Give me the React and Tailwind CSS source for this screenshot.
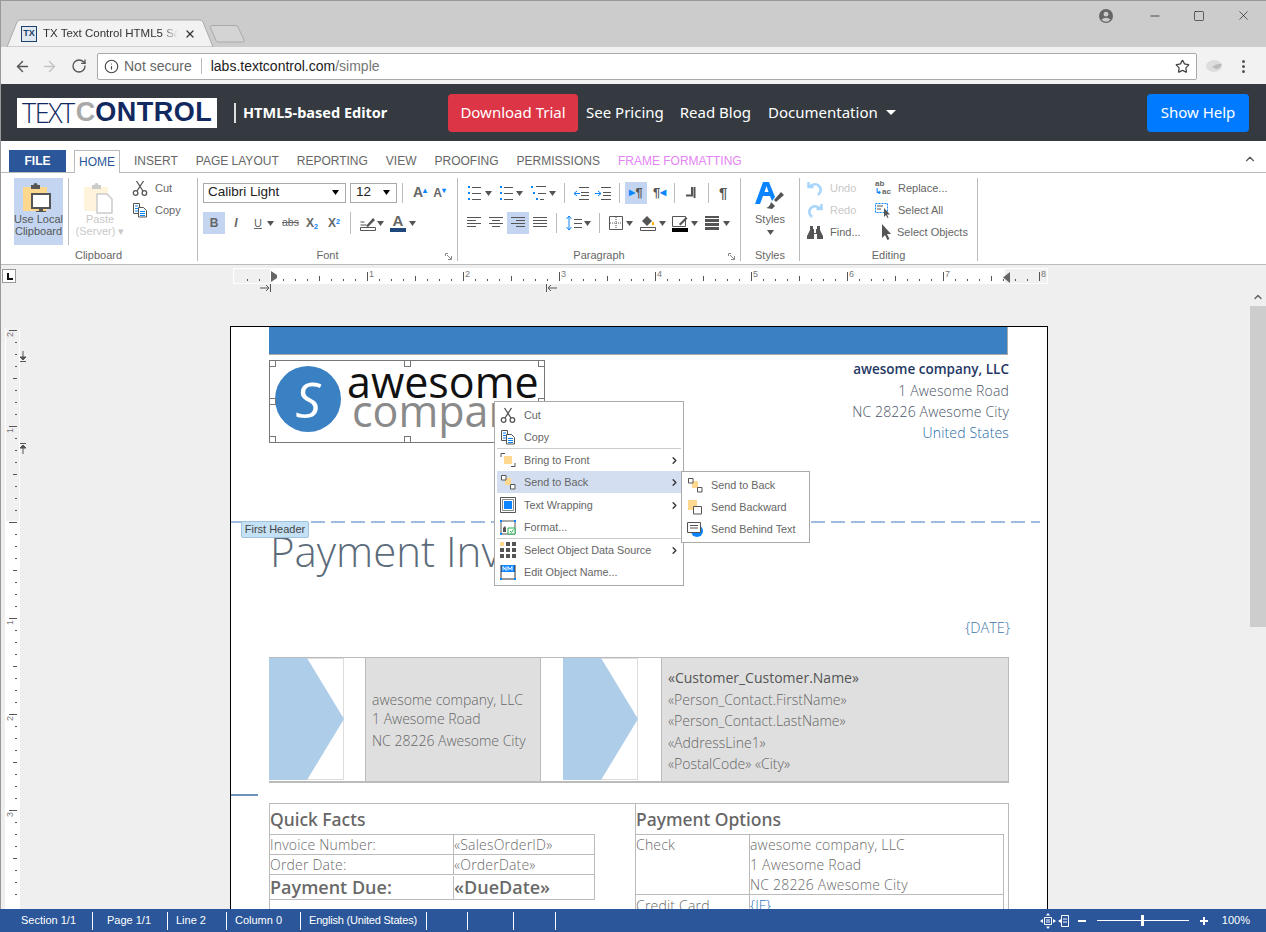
import React from 'react';
import clsx from 'clsx';
import { ArrowLeft, ArrowRight, RotateCw, Info, Star, X, Minus, Square, ChevronRight, ChevronUp } from 'lucide-react';

const Caret = ({ className }) => (
    <svg width="7" height="5" viewBox="0 0 7 5" className={clsx('shrink-0', className)}><path d="M0 0h7L3.500 5z" fill="#555" /></svg>
);

const Sep = ({ className }) => <div className={clsx('w-px bg-[#bbb] shrink-0', className)} />;

const Scissors = () => (
    <svg width="16" height="16" viewBox="0 0 16 16" fill="none" stroke="#555" strokeWidth="1.300">
        <circle cx="3.600" cy="13" r="2.300" /><circle cx="12.400" cy="13" r="2.300" />
        <path d="M5 11 11.500 1M11 11 4.500 1" />
    </svg>
);

const CopyIcon = () => (
    <svg width="16" height="16" viewBox="0 0 16 16" fill="none" strokeWidth="1">
        <path d="M1.500 1.500h6v10h-6z" stroke="#555" fill="#fff" />
        <path d="M6.500 5.500h5l3 3v6.500h-8z" stroke="#555" fill="#fff" />
        <path d="M3 4h3M3 6.500h3M3 9h3" stroke="#0a84ff" />
        <path d="M8 9.500h5M8 11.500h5M8 13.500h5" stroke="#0a84ff" />
    </svg>
);

const Clipboard = ({ faded, children }) => (
    <svg width="34" height="36" viewBox="0 0 34 36" className={faded ? 'opacity-30' : ''}>
        <path d="M1 6h24v24H1z" fill="#ffd88f" />
        <path d="M9 4h2.500a2 2 0 0 1 4 0H18v4H9z" fill="#555" />
        {children}
    </svg>
);

const Arrange = ({ variant }) => (
    <svg width="16" height="16" viewBox="0 0 16 16" fill="none" stroke="#555">
        {variant === 'front' && <><path d="M1 5V1.500h4M15 11v3.500h-4" /><path d="M4 4h8v8H4z" fill="#ffd88f" stroke="none" /></>}
        {variant === 'back' && <><path d="M5 4h6v7H5z" fill="#ffd88f" stroke="none" /><path d="M1.500 1.500h4.500v4.500H1.500zM10.500 10.500H15V15h-4.500z" fill="#fff" /></>}
        {variant === 'backward' && <><path d="M1 1h9v10H1z" fill="#ffd88f" stroke="none" /><path d="M6.500 7.500h8v7.500h-8z" fill="#fff" /></>}
    </svg>
);

const MenuItem = ({ icon, label, arrow, hover }) => (
    <div className={clsx('h-[22px] flex items-center pl-[2px] pr-[1px]', hover && 'bg-[#d3dff0]')}>
        <div className="w-[18px] flex justify-center">{icon}</div>
        <span className="ml-[7px] flex-1 text-[#666] whitespace-nowrap">{label}</span>
        {arrow && <ChevronRight size={11} strokeWidth={3} color="#333" />}
    </div>
);

const Menus = () => (
    <>
        <div className="absolute left-[494px] top-[401px] w-[190px] h-[185px] bg-white border border-[#aaa] pt-[2px] px-[2px] text-[10.800px] font-['Liberation_Sans',sans-serif] z-10">
            <MenuItem icon={<Scissors />} label="Cut" />
            <MenuItem icon={<CopyIcon />} label="Copy" />
            <div className="h-px bg-[#ccc]" />
            <MenuItem icon={<Arrange variant="front" />} label="Bring to Front" arrow />
            <MenuItem icon={<Arrange variant="back" />} label="Send to Back" arrow hover />
            <div className="h-px" />
            <MenuItem
                icon={<svg width="16" height="16" viewBox="0 0 16 16"><path d="M.5.500h15v15H.5z" fill="#fff" stroke="#555" /><path d="M2.500 2.500h11v11h-11z" fill="none" stroke="#888" /><path d="M4 4h8v8H4z" fill="#0a84ff" /></svg>}
                label="Text Wrapping"
                arrow
            />
            <MenuItem
                icon={<svg width="16" height="16" viewBox="0 0 16 16"><path d="M1 2h14v13H1z" fill="#fff" stroke="#555" /><path d="M3 13V9l2-2 1 2v4z" fill="#555" /><path d="M8 9h7v6H8z" fill="#fff" stroke="#22b14c" /><path d="m10 12 1.500 1.500 2-3" fill="none" stroke="#22b14c" /><path d="M0 1h2v2H0zM14 1h2v2h-2zM0 14h2v2H0z" fill="#0a84ff" /></svg>}
                label="Format..."
            />
            <div className="h-px bg-[#ccc]" />
            <MenuItem
                icon={<svg width="16" height="16" viewBox="0 0 16 16" fill="#555"><path d="M0 0h4v4H0z" fill="#ffd88f" /><path d="M6 0h4v4H6zM12 0h4v4h-4zM0 6h4v4H0zM6 6h4v4H6zM12 6h4v4h-4zM0 12h4v4H0zM6 12h4v4H6zM12 12h4v4h-4z" /></svg>}
                label="Select Object Data Source"
                arrow
            />
            <MenuItem
                icon={<svg width="16" height="16" viewBox="0 0 16 16"><path d="M1 1h14v7H1z" fill="#0a84ff" /><path d="M3 6.500V2.500l3 4v-4M8 6.500v-4l2 3 2-3v4" fill="none" stroke="#fff" /><path d="M1 1v14h14V1" fill="none" stroke="#333" /><path d="M0 14h2v2H0zM14 14h2v2h-2z" fill="#0a84ff" /></svg>}
                label="Edit Object Name..."
            />
        </div>
        <div className="absolute left-[681px] top-[471px] w-[129px] h-[72px] bg-white border border-[#aaa] pt-[2px] pl-[2px] text-[10.800px] font-['Liberation_Sans',sans-serif] z-20">
            <MenuItem icon={<Arrange variant="back" />} label="Send to Back" />
            <MenuItem icon={<Arrange variant="backward" />} label="Send Backward" />
            <MenuItem
                icon={<svg width="16" height="16" viewBox="0 0 16 16"><circle cx="10" cy="10" r="6" fill="#0a84ff" /><path d="M.5 1.500h13v10H.5z" fill="#fff" stroke="#555" /><path d="M3 4.500h8M3 7h8" stroke="#555" /></svg>}
                label="Send Behind Text"
            />
        </div>
    </>
);

const BrowserChrome = () => (
    <>
        <div className="h-[47px] bg-[#cccccc] flex items-end relative shrink-0">
            <svg width="240" height="28" viewBox="0 0 240 28" className="absolute left-[5px] top-[19px]">
                <path d="M2 28 12 3q1-2 3-2h180q2 0 3 2l10 25z" fill="#f2f2f2" stroke="#aaa" />
                <path d="M205 8q.5-1.500 2-1.500h24q1.500 0 2 1.500l6 13q.5 2-1.500 2H213q-1.500 0-2-1.500z" fill="#d4d4d4" stroke="#aaa" />
            </svg>
            <div className="relative flex items-center h-[27px] pl-[21px] w-[205px]">
                <div className="w-[16px] h-[16px] border border-[#1d3f6b] bg-[#dfe7ef] flex items-center justify-center text-[9px] font-bold text-[#1d3f6b] font-['Liberation_Sans',sans-serif]">TX</div>
                <span className="ml-[6px] w-[135px] overflow-hidden whitespace-nowrap text-[11.500px] text-[#333] font-['Liberation_Sans',sans-serif] [mask-image:linear-gradient(to_right,black_88%,transparent)]">TX Text Control HTML5 Sa</span>
                <X size={12} strokeWidth={2.500} color="#333" className="ml-[6px]" />
            </div>
            <div className="flex-1" />
            <div className="self-start flex items-center h-[31px] mr-[15px] text-[#333]">
                <svg width="14" height="14" viewBox="0 0 14 14" className="mr-[35px]"><circle cx="7" cy="7" r="7" fill="#666" /><circle cx="7" cy="5.200" r="2.400" fill="#ccc" /><path d="M2.500 10.500q4.500-3.500 9 0-2 2.200-4.500 2.200t-4.500-2.200" fill="#ccc" /></svg>
                <Minus size={14} strokeWidth={1.200} color="#111" className="mr-[31px]" />
                <Square size={12} strokeWidth={1.200} color="#111" className="mr-[31px]" />
                <X size={15} strokeWidth={1} color="#111" />
            </div>
        </div>
        <div className="h-[37px] bg-[#f2f2f2] flex items-center pl-[14px] pt-[1px] shrink-0">
            <ArrowLeft size={17} strokeWidth={2} color="#555" />
            <ArrowRight size={17} strokeWidth={2} color="#c4c4c4" className="ml-[10px]" />
            <RotateCw size={16} strokeWidth={2} color="#555" className="ml-[13px]" />
            <div className="ml-[10px] w-[1100px] h-[27px] bg-white border border-[#a9a9a9] rounded-[2px] flex items-center pl-[6px] pr-[6px] text-[14px] font-['Liberation_Sans',sans-serif]">
                <Info size={15} color="#444" strokeWidth={1.800} />
                <span className="ml-[5px] text-[#666]">Not secure</span>
                <div className="w-px h-[16px] bg-[#bbb] mx-[9px]" />
                <span className="text-[#222]">labs.textcontrol.com</span>
                <span className="text-[#777]">/simple</span>
                <div className="flex-1" />
                <Star size={15} strokeWidth={2} color="#444" />
            </div>
            <svg width="18" height="14" viewBox="0 0 18 14" className="ml-[8px]"><ellipse cx="9" cy="7" rx="8" ry="6" fill="#ddd" /><path d="M7 8q5-4 10-3-2 5-6 5z" fill="#bbb" /></svg>
            <div className="ml-[19px] flex flex-col gap-[2px]">
                <div className="w-[3px] h-[3px] rounded-full bg-[#555]" />
                <div className="w-[3px] h-[3px] rounded-full bg-[#555]" />
                <div className="w-[3px] h-[3px] rounded-full bg-[#555]" />
            </div>
        </div>
    </>
);

const Navbar = () => (
    <div className="h-[57px] bg-[#343a40] flex items-center pl-[17px] text-white font-['Noto_Sans',sans-serif] shrink-0">
        <div className="w-[200px] h-[30px] bg-white flex items-center pl-[5px] font-['Liberation_Sans',sans-serif] text-[#12295f] text-[27px] leading-none whitespace-nowrap overflow-hidden">
            <span className="tracking-[-1.500px] font-['Open_Sans',sans-serif] font-light">TEXT</span>
            <span className="font-bold text-[#a9a9a9] ml-[2px]">C</span>
            <span className="font-bold tracking-[0.500px]">ONTROL</span>
        </div>
        <div className="w-[2px] h-[20px] bg-[#ddd] ml-[17px]" />
        <span className="ml-[7px] text-[14.500px] font-bold w-[205px] whitespace-nowrap">HTML5-based Editor</span>
        <div className="w-[130px] h-[38px] bg-[#dc3545] rounded-[4px] flex items-center justify-center text-[15px]">Download Trial</div>
        <span className="ml-[8px] text-[15px]">See Pricing</span>
        <span className="ml-[16px] text-[15px]">Read Blog</span>
        <span className="ml-[17px] text-[15px]">Documentation</span>
        <svg width="10" height="5" viewBox="0 0 10 5" className="ml-[8px]"><path d="M0 0h10L5 5z" fill="#fff" /></svg>
        <div className="flex-1" />
        <div className="w-[102px] h-[38px] bg-[#007bff] rounded-[4px] flex items-center justify-center text-[15px] mr-[17px]">Show Help</div>
    </div>
);

const RibbonTabs = () => (
    <div className="h-[32px] bg-white border-b border-[#bbb] flex items-end pl-[9px] text-[12px] text-[#666] font-['Liberation_Sans',sans-serif] shrink-0">
        <div className="w-[57px] h-[22px] bg-[#2b579a] text-white font-bold flex items-center justify-center">FILE</div>
        <div className="ml-[8px] w-[46px] h-[23px] bg-white border border-b-0 border-[#bbb] text-[#2b579a] flex items-center justify-center -mb-px">HOME</div>
        <div className="flex gap-[18px] ml-[14px] h-[22px] items-center">
            <span>INSERT</span>
            <span>PAGE LAYOUT</span>
            <span>REPORTING</span>
            <span>VIEW</span>
            <span>PROOFING</span>
            <span>PERMISSIONS</span>
            <span className="text-[#e584f5]">FRAME FORMATTING</span>
        </div>
        <div className="flex-1" />
        <ChevronUp size={14} strokeWidth={2} color="#555" className="mr-[9px] mb-[6px]" />
    </div>
);

const Group = ({ label, className, corner, children }) => (
    <div className={clsx('relative h-[83px] border-r border-[#bbb] shrink-0', className)}>
        {children}
        <div className="absolute left-0 right-0 top-[69px] text-center text-[11px] text-[#666]">{label}</div>
        {corner && (
            <svg width="7" height="7" viewBox="0 0 7 7" className="absolute right-[5px] top-[75px]"><path d="M.5 3V.500H3M3 6.500h3.500V3" fill="none" stroke="#888" /><path d="m2 2 4 4" stroke="#888" /></svg>
        )}
    </div>
);

const G = ({ children, w = 18, h = 16 }) => (
    <svg width={w} height={h} viewBox={`0 0 ${w} ${h}`} fill="none" stroke="#555" className="shrink-0">{children}</svg>
);

const ClipboardGroup = () => (
    <Group label="Clipboard" className="w-[198px] flex pl-[14px]">
        <div className="w-[49px] h-[67px] bg-[#c3d5f0] flex flex-col items-center pt-[3px] text-[11px] leading-[12px] text-[#555] text-center">
            <Clipboard>
                <path d="M10 13h18v14H10z" fill="#fff" stroke="#555" strokeWidth="2" />
                <path d="M17 28h4v2h3v1H14v-1h3z" fill="#555" />
            </Clipboard>
            <div className="mt-[-4px]">Use Local Clipboard</div>
        </div>
        <Sep className="h-[67px] ml-[5px]" />
        <div className="w-[52px] ml-[5px] flex flex-col items-center pt-[3px] text-[11px] leading-[12px] text-[#c9c9c9] text-center">
            <Clipboard faded>
                <path d="M14 13h10l5 5v14H14z" fill="#fff" stroke="#555" strokeWidth="1.500" />
            </Clipboard>
            <div className="mt-[-4px] whitespace-nowrap">Paste<br />(Server) ▾</div>
        </div>
        <div className="ml-[6px] flex flex-col text-[11px] text-[#666] mt-[-1px]">
            <div className="h-[22px] flex items-center gap-[7px]"><Scissors /><span>Cut</span></div>
            <div className="h-[22px] flex items-center gap-[7px]"><CopyIcon /><span>Copy</span></div>
        </div>
    </Group>
);

const FontGroup = () => (
    <Group label="Font" className="w-[260px] pl-[5px] pt-[4px]" corner>
        <div className="flex items-center h-[21px] text-[13.500px] text-[#222]">
            <div className="w-[143px] h-[20px] border border-[#aaa] flex items-center pl-[4px] pr-[6px] justify-between">Calibri Light<Caret className="[&_path]:fill-black" /></div>
            <div className="ml-[4px] w-[47px] h-[20px] border border-[#aaa] flex items-center pl-[5px] pr-[6px] justify-between">12<Caret className="[&_path]:fill-black" /></div>
            <Sep className="h-[20px] ml-[5px]" />
            <span className="ml-[10px] text-[14px] font-bold text-[#666]">A<sup className="text-[#0a84ff] text-[8px]">▴</sup></span>
            <span className="ml-[6px] text-[12px] font-bold text-[#666]">A<sup className="text-[#0a84ff] text-[8px]">▾</sup></span>
        </div>
        <div className="flex items-center h-[22px] mt-[9px] text-[12px] text-[#666]">
            <div className="w-[22px] h-[22px] bg-[#c3d5f0] flex items-center justify-center font-bold">B</div>
            <div className="w-[20px] ml-[1px] text-center italic font-bold">I</div>
            <div className="ml-[8px] w-[9px] underline text-[11px]">U</div>
            <Caret className="ml-[4px]" />
            <div className="ml-[8px] w-[17px] line-through text-[10.500px]">abs</div>
            <div className="ml-[7px] w-[14px] font-bold whitespace-nowrap">X<sub className="text-[#0a84ff] text-[7px]">2</sub></div>
            <div className="ml-[8px] w-[14px] font-bold whitespace-nowrap">X<sup className="text-[#0a84ff] text-[7px]">2</sup></div>
            <Sep className="h-[22px] ml-[8px]" />
            <div className="ml-[8px]">
                <G w={17} h={18}>
                    <path d="M1.500 13.500h15v3h-15z" fill="#fff" />
                    <path d="m7 12 7-8 2 2-7 7z" fill="#555" stroke="none" />
                    <path d="M1.500 8h4M1.500 11h6" />
                </G>
            </div>
            <Caret className="ml-[1px]" />
            <div className="ml-[6px] w-[16px] flex flex-col items-center">
                <span className="text-[15px] leading-[14px] font-bold">A</span>
                <div className="w-[16px] h-[4px] bg-[#1f497d]" />
            </div>
            <Caret className="ml-[3px]" />
        </div>
    </Group>
);

const ParagraphGroup = () => (
    <Group label="Paragraph" className="w-[283px] pl-[9px] pt-[4px]" corner>
        <div className="flex items-center h-[22px]">
            <G w={14}><path d="M1 2h2M1 8h2M1 14h2" stroke="#0a84ff" strokeWidth="2" /><path d="M5 2.500h9M5 8.500h9M5 14.500h9" /></G>
            <Caret className="ml-[4px]" />
            <div className="ml-[7px]"><G w={14}><path d="M5 2.500h9M5 8.500h9M5 14.500h9" /><path d="M1 2h2M1 8h2M1 14h2" stroke="#0a84ff" strokeWidth="2" /></G></div>
            <Caret className="ml-[3px]" />
            <div className="ml-[7px]"><G w={16}><path d="M6 1.500h10M8 8.500h8M10 14.500h4" /><path d="M1 2h2M3 8h2M6 14h2" stroke="#0a84ff" strokeWidth="2" /></G></div>
            <Caret className="ml-[3px]" />
            <Sep className="h-[20px] ml-[8px]" />
            <div className="ml-[8px]"><G w={16}><path d="M6 2.500h10M8 7.500h8M8 10.500h8M6 14.500h10" /><path d="M7 8.500H1m3-2.500L1 8.500 4 11" stroke="#0a84ff" /></G></div>
            <div className="ml-[6px]"><G w={16}><path d="M6 2.500h10M8 7.500h8M8 10.500h8M6 14.500h10" /><path d="M0 8.500h6m-3-2.500 3 2.500L3 11" stroke="#0a84ff" /></G></div>
            <Sep className="h-[20px] ml-[8px]" />
            <div className="ml-[5px] w-[22px] h-[22px] bg-[#c3d5f0] flex items-center justify-center text-[13px] font-bold text-[#555]"><span className="text-[#0a84ff] text-[8px]">▶</span>¶</div>
            <div className="ml-[6px] w-[15px] flex items-center text-[13px] font-bold text-[#555]">¶<span className="text-[#0a84ff] text-[8px]">◀</span></div>
            <Sep className="h-[20px] ml-[6px]" />
            <div className="ml-[10px]"><G w={12}><path d="M1 10.500h6V2M9.500 2v11" strokeWidth="2" /></G></div>
            <Sep className="h-[20px] ml-[11px]" />
            <div className="ml-[10px] text-[15px] font-bold text-[#555]">¶</div>
        </div>
        <div className="flex items-center h-[22px] mt-[8px]">
            <G w={14}><path d="M0 2.500h14M0 5.500h9M0 8.500h14M0 11.500h9" /></G>
            <div className="ml-[8px]"><G w={14}><path d="M0 2.500h14M3 5.500h8M0 8.500h14M3 11.500h8" /></G></div>
            <div className="ml-[4px] w-[22px] h-[22px] bg-[#c3d5f0] flex items-center justify-center"><G w={14}><path d="M0 2.500h14M5 5.500h9M0 8.500h14M5 11.500h9" /></G></div>
            <div className="ml-[4px]"><G w={14}><path d="M0 2.500h14M0 5.500h14M0 8.500h14M0 11.500h14" /></G></div>
            <Sep className="h-[20px] ml-[9px]" />
            <div className="ml-[9px]"><G w={16}><path d="M8 4.500h8M8 8.500h8M8 12.500h8" /><path d="M3 1v14M.5 4 3 1l2.500 3M.5 12 3 15l2.500-3" stroke="#0a84ff" /></G></div>
            <Caret className="ml-[2px]" />
            <Sep className="h-[20px] ml-[8px]" />
            <div className="ml-[9px]"><G w={14}><path d="M.5 1.500h13v13H.5z" /><path d="M7 2v12M1 8h12" strokeDasharray="1 1" /></G></div>
            <Caret className="ml-[3px]" />
            <div className="ml-[7px]"><G w={16} h={18}><path d="M.5 13.500h15v3H.5z" fill="#fff" /><path d="m2 7 5-5 5 5-5 5z" fill="#555" stroke="none" /><path d="M13 8v3" stroke="#ffb000" strokeWidth="2" /></G></div>
            <Caret className="ml-[3px]" />
            <div className="ml-[6px] w-[16px] flex flex-col"><G w={16} h={13}><path d="M.5 1.500h13v10H.5z" fill="#fff" /><path d="m7 9 7-7 1.500 1.500-7 7z" fill="#555" stroke="none" /></G><div className="h-[4px] bg-black" /></div>
            <Caret className="ml-[3px]" />
            <div className="ml-[7px] w-[14px] flex flex-col gap-[1px]"><div className="h-[2px] bg-[#555]" /><div className="h-[3px] bg-[#555]" /><div className="h-[3px] bg-[#555]" /><div className="h-[3px] bg-[#555]" /></div>
            <Caret className="ml-[4px]" />
        </div>
    </Group>
);

const StylesGroup = () => (
    <Group label="Styles" className="w-[59px] flex flex-col items-center pt-[3px]">
        <svg width="30" height="30" viewBox="0 0 30 30">
            <path fillRule="evenodd" d="M0 23 8 1h6l6 15-3 4-2-5H8l-3 8zM9.500 11h4L11.500 5z" fill="#0a84ff" />
            <path d="m19 19 7-8 3 3-8 7zM16 21l4 4-3 3-6-1q4-1 5-6" fill="#555" />
        </svg>
        <div className="text-[11px] text-[#666] leading-[14px] mt-[1px]">Styles</div>
        <Caret className="mt-[4px]" />
    </Group>
);

const EditRow = ({ icon, label, className, faded, gap = 'ml-[7px]' }) => (
    <div className={clsx('flex items-center h-[22px] text-[11px]', faded ? 'text-[#c9c9c9]' : 'text-[#666]', className)}>
        {icon}
        <span className={gap}>{label}</span>
    </div>
);

const Cursor = () => (
    <svg width="14" height="16" viewBox="0 0 14 16"><path d="M3 0v14l3-3 2.500 5 2-1-2.500-5h4z" fill="#555" /></svg>
);

const EditingGroup = () => (
    <Group label="Editing" className="w-[178px] flex pl-[7px]">
        <div className="w-[68px] mt-[-1px]">
            <EditRow faded label="Undo" icon={<svg width="16" height="16" viewBox="0 0 16 16" fill="none" stroke="#a8d5fb" strokeWidth="2.500"><path d="M1.500 2v5h5M2 7q6-5 10-1t-1 9" /></svg>} />
            <EditRow faded label="Redo" icon={<svg width="16" height="16" viewBox="0 0 16 16" fill="none" stroke="#a8d5fb" strokeWidth="2.500"><path d="M14.500 2v5h-5M14 7Q8 2 4 6t1 9" /></svg>} />
            <EditRow label="Find..." icon={<svg width="16" height="14" viewBox="0 0 16 14" fill="#555"><path d="M3 1h3v3h1v4h2V4h1V1h3v4l3 6v3h-6V9H7v5H0v-3l3-6z" /></svg>} />
        </div>
        <div className="mt-[-1px]">
            <EditRow gap="ml-[8px]" label="Replace..." icon={<span className="w-[15px] text-[8px] leading-[8px] font-bold text-[#666]">ab<br /><span className="text-[#0a84ff]">↳</span>ac</span>} />
            <EditRow gap="ml-[6px]" label="Select All" icon={<svg width="17" height="16" viewBox="0 0 17 16" fill="none"><path d="M.5 1.500h12v9H.5z" stroke="#0a84ff" strokeDasharray="2 1" /><path d="M2 4h6M2 7h4" stroke="#555" /><path d="M9 6v9l2-2 1.500 3 1-.5-1.500-3h3z" fill="#555" /></svg>} />
            <EditRow gap="ml-[4px]" label="Select Objects" icon={<Cursor />} className="pl-[4px]" />
        </div>
    </Group>
);

const Ribbon = () => (
    <div className="h-[92px] bg-white border-b border-[#bbb] flex items-start pt-[5px] font-['Liberation_Sans',sans-serif] shrink-0">
        <ClipboardGroup />
        <FontGroup />
        <ParagraphGroup />
        <StylesGroup />
        <EditingGroup />
    </div>
);

const inchesX = [1, 2, 3, 4, 5, 6, 7, 8];

const HRuler = () => {
    const ticks = [];
    for (let i = -2; i < 67; i++) {
        const x = 38 + i * 12;
        if (i % 8 === 0) continue;
        const half = i % 4 === 0;
        ticks.push(<path key={i} d={`M${x + 0.5} ${half ? 8 : 11}v${half ? 5 : 2}`} stroke="#555" />);
    }
    return (
        <svg width="815" height="16" viewBox="0 0 815 16" className="block font-['Liberation_Sans',sans-serif]">
            <rect width="815" height="16" fill="#fff" />
            <rect x="1" y="1" width="36" height="14" fill="#f0f0f0" />
            <rect x="772" y="1" width="42" height="14" fill="#f0f0f0" />
            {ticks}
            {inchesX.map((n) => (
                <g key={n}>
                    <path d={`M${38 + n * 96 + 0.5} 4v9`} stroke="#555" />
                    <text x={38 + n * 96 + 2} y="9" fontSize="9" fill="#777">{n}</text>
                </g>
            ))}
            <path d="M38 3v11l6-4V7z" fill="#666" />
            <path d="M777 4v11l-7-5.500z" fill="#666" />
        </svg>
    );
};

const VRuler = () => {
    const ticks = [];
    for (let i = 0; i < 48; i++) {
        const y = 2 + i * 12;
        const len = i % 8 === 0 ? 8 : i % 4 === 0 ? 4 : 2;
        ticks.push(<path key={i} d={`M${12 - len} ${y + 0.5}h${len}`} stroke="#555" />);
    }
    return (
        <svg width="16" height="590" viewBox="0 0 16 590" className="block font-['Liberation_Sans',sans-serif]">
            <rect width="15" height="590" fill="#fff" />
            <rect x="1" width="13" height="193" fill="#f0f0f0" />
            {ticks}
            {[[2, 8], [1, 104], [1, 296], [2, 392], [3, 488]].map(([n, y]) => (
                <text key={y} x="7" y={y} fontSize="9" fill="#777" transform={`rotate(-90 8 ${y})`}>{n}</text>
            ))}
        </svg>
    );
};

const Handle = ({ className }) => <div className={clsx('absolute w-[7px] h-[7px] bg-white border border-[#777]', className)} />;

const LogoFrame = () => (
    <div className="relative w-[276px] h-[83px] border border-[#777] font-['Open_Sans',sans-serif]">
        <div className="flex items-start overflow-hidden h-full">
            <div className="w-[66px] h-[66px] rounded-full bg-[#3981c3] flex items-center justify-center text-white text-[50px] leading-none italic font-normal ml-[5px] mt-[5px] shrink-0">S</div>
            <div className="ml-[6px] text-[43px] leading-[29px] mt-[6px] whitespace-nowrap">
                <div className="text-[#111]">awesome</div>
                <div className="text-[#8a8a8a] ml-[5px]">company</div>
            </div>
        </div>
        <Handle className="left-[-1px] top-[-1px]" />
        <Handle className="left-[134px] top-[-1px]" />
        <Handle className="right-[-1px] top-[-1px]" />
        <Handle className="left-[-1px] top-[37px]" />
        <Handle className="right-[-1px] top-[37px]" />
        <Handle className="left-[-1px] bottom-[-1px]" />
        <Handle className="left-[134px] bottom-[-1px]" />
    </div>
);

const Chevron = () => (
    <svg width="75" height="122" viewBox="0 0 75 122" className="block shrink-0">
        <rect x="0.500" y="0.500" width="74" height="121" fill="#fff" stroke="#ddd" />
        <path d="M0 0h38l37 61-37 61H0z" fill="#aecde9" />
    </svg>
);

const DocTable = () => (
    <div className="ml-[38px] mt-[7px] w-[740px] border border-[#bbb] h-[200px] flex text-[#6a6a6a] text-[14px] font-light tracking-[0.2px]">
        <div className="w-[366px] pt-[3px] border-r border-[#bbb]">
            <div className="h-[27px] text-[17.500px] font-medium leading-[24px] text-[#666] font-['Noto_Sans',sans-serif] tracking-normal">Quick Facts</div>
            <div className="w-[325px] border border-l-0 border-[#bbb]">
                <div className="flex h-[20px] border-b border-[#bbb] items-center"><span className="w-[184px] border-r border-[#bbb] leading-[19px]">Invoice Number:</span><span>«SalesOrderID»</span></div>
                <div className="flex h-[20px] border-b border-[#bbb] items-center"><span className="w-[184px] border-r border-[#bbb] leading-[19px]">Order Date:</span><span>«OrderDate»</span></div>
                <div className="flex h-[24px] items-center text-[18px] font-semibold tracking-normal"><span className="w-[184px] border-r border-[#bbb] leading-[23px]">Payment Due:</span><span>«DueDate»</span></div>
            </div>
        </div>
        <div className="flex-1 pt-[3px]">
            <div className="h-[27px] text-[17.500px] font-medium leading-[24px] text-[#666] font-['Noto_Sans',sans-serif] tracking-normal">Payment Options</div>
            <div className="w-[368px] border border-[#bbb] border-l-0">
                <div className="flex h-[60px] border-b border-[#bbb] leading-[20px]">
                    <span className="w-[114px] border-r border-[#bbb]">Check</span>
                    <div>awesome company, LLC<br />1 Awesome Road<br />NC 28226 Awesome City</div>
                </div>
                <div className="flex h-[20px]"><span className="w-[114px] border-r border-[#bbb]">Credit Card</span><span className="text-[#2e74b5]">{'{IF}'}</span></div>
            </div>
        </div>
    </div>
);

const Page = () => (
    <div className="relative w-[818px] h-[700px] bg-white border border-b-0 border-black font-['Open_Sans',sans-serif] overflow-hidden">
        <div className="ml-[38px] w-[739px] h-[28px] bg-[#3981c3] border-b border-r border-[#aaa]" />
        <div className="flex justify-between ml-[38px] w-[740px] mt-[5px]">
            <LogoFrame />
            <div className="text-right text-[14px] font-light leading-[21px] text-[#4a5568] tracking-[0.15px] mt-[-1px]">
                <div className="font-semibold text-[13.500px] tracking-normal text-[#1f3864]">awesome company, LLC</div>
                <div>1 Awesome Road</div>
                <div>NC 28226 Awesome City</div>
                <div className="text-[#1f6aa8]">United States</div>
            </div>
        </div>
        <div className="w-[809px] h-[2px] mt-[78px] bg-[repeating-linear-gradient(90deg,#9dbce0_0_14px,transparent_14px_20px)]" />
        <div className="relative ml-[38px] h-[94px]">
            <div className="absolute left-[-28px] top-[0px] w-[68px] h-[17px] bg-[#c5e1f5] border border-[#a0c4e0] rounded-[2px] text-[11px] text-[#444] text-center leading-[15px] font-['Liberation_Sans',sans-serif] z-[1]">First Header</div>
            <div className="text-[42px] font-light leading-[60px] text-[#5c6b7a] mt-[-2px] ml-[1px]">Payment Invoice</div>
        </div>
        <div className="ml-[38px] w-[741px] text-right text-[14.500px] font-light text-[#3f76a8] leading-[20px] mt-[3px]">{'{DATE}'}</div>
        <div className="ml-[38px] mt-[19px] w-[740px] h-[126px] border-b-2 border-t border-[#bbb] flex text-[14px] font-light text-[#666]">
            <Chevron />
            <div className="w-[21px] shrink-0" />
            <div className="w-[176px] bg-[#dfdfdf] border-x border-[#bbb] pl-[6px] pt-[32px] leading-[20px]">
                <div>awesome company, LLC</div><div className="mt-[-1px]">1 Awesome Road</div><div className="mt-[2px]">NC 28226 Awesome City</div>
            </div>
            <div className="w-[22px] shrink-0" />
            <Chevron />
            <div className="w-[23px] shrink-0" />
            <div className="flex-1 bg-[#dfdfdf] border-x border-[#bbb] pl-[6px] pt-[9px] leading-[21.500px]">
                <div className="font-medium text-[#555]">«Customer_Customer.Name»</div>
                <div>«Person_Contact.FirstName»</div>
                <div>«Person_Contact.LastName»</div>
                <div>«AddressLine1»</div>
                <div>«PostalCode» «City»</div>
            </div>
        </div>
        <div className="w-[27px] h-[2px] bg-[#6d93bd] mt-[11px]" />
        <DocTable />
    </div>
);

const Workspace = () => (
    <div className="flex-1 bg-[#efefef] flex flex-col overflow-hidden relative">
        <div className="h-[25px] flex shrink-0 pl-[2px]">
            <div className="w-[14px] h-[14px] mt-[4px] bg-white border border-[#999] flex items-center justify-center"><svg width="7" height="7" viewBox="0 0 7 7"><path d="M1 0h2v5h4v2H1z" fill="#111" /></svg></div>
            <div className="ml-[217px] mt-[3px] relative">
                <HRuler />
                <svg width="12" height="8" viewBox="0 0 12 8" className="absolute left-[27px] top-[16px]"><path d="M0 4h9M6 1l3 3-3 3M10.500 0v8" stroke="#555" fill="none" /></svg>
                <svg width="12" height="8" viewBox="0 0 12 8" className="absolute left-[312px] top-[16px]"><path d="M12 4H3M6 1 3 4l3 3M1.500 0v8" stroke="#555" fill="none" /></svg>
            </div>
        </div>
        <div className="flex-1 flex overflow-hidden">
            <div className="w-[230px] pl-[5px] pt-[38px] shrink-0 relative">
                <VRuler />
                <svg width="8" height="11" viewBox="0 0 8 11" className="absolute left-[19px] top-[61px]"><path d="M4 0v8M1 6l3 3 3-3zM1 10.500h6" stroke="#555" fill="#555" /></svg>
                <svg width="8" height="11" viewBox="0 0 8 11" className="absolute left-[19px] top-[153px]"><path d="M4 11V3M1 5l3-3 3 3zM1 .500h6" stroke="#555" fill="#555" /></svg>
            </div>
            <div className="flex-1 pt-[36px] min-w-0"><Page /></div>
            <div className="w-[16px] flex flex-col items-center shrink-0">
                <ChevronUp size={12} strokeWidth={3} color="#666" className="mt-[1px]" />
                <div className="w-[16px] h-[321px] bg-[#cdcdcd] mt-[3px]" />
            </div>
        </div>
    </div>
);

const StatusBar = () => (
    <div className="h-[23px] bg-[#2b579a] flex items-center text-white text-[11px] font-['Liberation_Sans',sans-serif] shrink-0 whitespace-nowrap">
        <span className="ml-[21px] w-[71px]">Section 1/1</span>
        <div className="w-px h-[18px] bg-white" />
        <span className="ml-[14px] w-[60px]">Page 1/1</span>
        <div className="w-px h-[18px] bg-white" />
        <span className="ml-[8px] w-[50px]">Line 2</span>
        <div className="w-px h-[18px] bg-white" />
        <span className="ml-[8px] w-[65px]">Column 0</span>
        <div className="w-px h-[18px] bg-white" />
        <span className="ml-[8px] w-[117px] tracking-[-0.2px]">English (United States)</span>
        <div className="w-px h-[18px] bg-white" />
        <div className="w-px h-[18px] bg-white ml-[40px]" />
        <div className="w-px h-[18px] bg-white ml-[45px]" />
        <div className="w-px h-[18px] bg-white ml-[41px]" />
        <div className="flex-1" />
        <svg width="32" height="16" viewBox="0 0 32 16" fill="none" stroke="#fff" className="mr-[6px]">
            <path d="M4.500 4.500h7v7h-7zM6 7h4M6 9h4M21.500 2.500h7v11h-7zM23 6h4M23 9h4" />
            <path d="M8 0 6 2.500h4zM8 16l-2-2.500h4zM0 8l3-2v4zM16 8l-3-2v4zM18 8l3-2v4z" fill="#fff" stroke="none" />
        </svg>
        <div className="w-[8px] h-[2px] bg-white" />
        <div className="ml-[11px] w-[92px] h-px bg-white relative">
            <div className="absolute left-[44px] top-[-5px] w-[3px] h-[11px] bg-white" />
        </div>
        <div className="ml-[11px] w-[8px] h-[8px] relative">
            <div className="absolute left-0 top-[3px] w-[8px] h-[2px] bg-white" />
            <div className="absolute left-[3px] top-0 w-[2px] h-[8px] bg-white" />
        </div>
        <span className="ml-[14px] mr-[16px]">100%</span>
    </div>
);

export default function App() {
    return (
        <div className="relative w-[1266px] h-[932px] overflow-hidden flex flex-col bg-white">
            <BrowserChrome />
            <Navbar />
            <RibbonTabs />
            <Ribbon />
            <Workspace />
            <StatusBar />
            <Menus />
            <div className="absolute left-0 top-0 w-px h-[909px] bg-[#999] z-30" />
            <div className="absolute left-0 top-0 w-full h-px bg-[#999] z-30" />
        </div>
    );
}
